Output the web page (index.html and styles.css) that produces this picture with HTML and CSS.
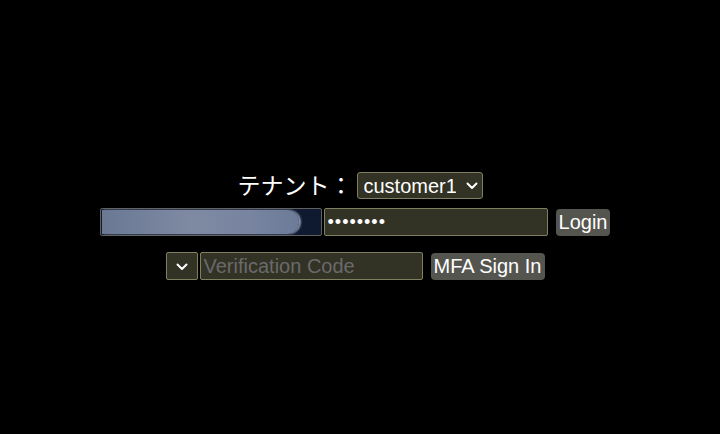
FILE: index.html
```html
<!DOCTYPE html>
<html lang="ja">
<head>
  <meta charset="UTF-8">
  <meta name="viewport" content="width=device-width, initial-scale=1.0">
  <title>Login</title>
  <link rel="stylesheet" href="styles.css">
</head>
<body>

  <div class="login">
    <div class="row tenant-row">
      <label for="tenant" class="tenant-label">テナント：</label>
      <span class="select-wrap tenant-wrap">
        <select id="tenant" class="select">
          <option>customer1</option>
        </select>
        <svg class="chevron" width="12" height="8" viewBox="0 0 12 8"><path d="M1.5 1.5 L6 6 L10.5 1.5" fill="none" stroke="#fff" stroke-width="2" stroke-linecap="round" stroke-linejoin="round"/></svg>
      </span>
    </div>

    <div class="row shifted">
      <div class="field user">
        <span class="blur"></span>
      </div>
      <input type="password" class="field pass" value="12345678">
      <button class="btn">Login</button>
    </div>

    <div class="row shifted mfa-row">
      <span class="select-wrap mfa-wrap">
        <select class="select mfa-select">
          <option></option>
        </select>
        <svg class="chevron" width="12" height="8" viewBox="0 0 12 8"><path d="M1.5 1.5 L6 6 L10.5 1.5" fill="none" stroke="#fff" stroke-width="2" stroke-linecap="round" stroke-linejoin="round"/></svg>
      </span>
      <input type="text" class="field code" placeholder="Verification Code">
      <button class="btn mfa-btn">MFA Sign In</button>
    </div>
  </div>

</body>
</html>
```

FILE: styles.css
```css
body {
  margin: 0;
  background: #000;
  color: #fff;
  font-family: 'Liberation Sans', Arial, sans-serif;
  height: 434px;
}

.login {
  padding-top: 169px;
  display: flex;
  flex-direction: column;
  align-items: center;
}

.row {
  display: flex;
  align-items: center;
}

.shifted {
  margin-right: 10px;
}

.tenant-row {
  height: 33px;
  margin-bottom: 6px;
}

.tenant-label {
  font-family: 'Noto Sans CJK JP', sans-serif;
  font-size: 23px;
  margin-right: 4px;
  margin-top: -4px;
}

.select-wrap {
  position: relative;
  display: inline-block;
}

.select {
  appearance: none;
  -webkit-appearance: none;
  background: #323225;
  border: 1px solid #808060;
  border-radius: 3px;
  color: #fff;
  font-family: 'Liberation Sans', Arial, sans-serif;
  font-size: 20px;
  height: 27px;
  padding: 0 26px 0 6px;
  outline: none;
}

.tenant-wrap .select {
  width: 126px;
}

.chevron {
  position: absolute;
  right: 5px;
  top: 10px;
  pointer-events: none;
}

.field {
  box-sizing: border-box;
  height: 28px;
  background: #323225;
  border: 1px solid #808060;
  border-radius: 2px;
  color: #fff;
  font-family: 'Liberation Sans', Arial, sans-serif;
  font-size: 20px;
  padding: 0 3px;
  outline: none;
}

.user {
  width: 222px;
  background: #0f1a30;
  border-color: #606060;
  padding: 1px 22px 1px 1px;
  margin-right: 2px;
}

.blur {
  display: block;
  height: 100%;
  border-radius: 0 12px 12px 0;
  background: linear-gradient(90deg, #6a7894, #7f8aa2 45%, #7884a0 75%, #6c7b98);
  box-shadow: 2px 0 2px rgba(220, 230, 255, 0.6);
}

.pass {
  width: 224px;
  font-size: 18px;
  letter-spacing: 1px;
}

.btn {
  margin-left: 8px;
  height: 27px;
  background: #55554f;
  border: none;
  border-radius: 4px;
  color: #fff;
  font-family: 'Liberation Sans', Arial, sans-serif;
  font-size: 20px;
  padding: 0 3px;
}

.mfa-row {
  margin-top: 16px;
}

.mfa-select {
  width: 32px;
  height: 28px;
  padding: 0;
  border-radius: 2px;
}

.mfa-wrap .chevron {
  right: 10px;
  top: 11px;
}

.mfa-wrap {
  margin-right: 2px;
}

.code {
  width: 223px;
}

.code::placeholder {
  color: #6a6a6c;
}

.mfa-btn {
  width: 114px;
}
```
